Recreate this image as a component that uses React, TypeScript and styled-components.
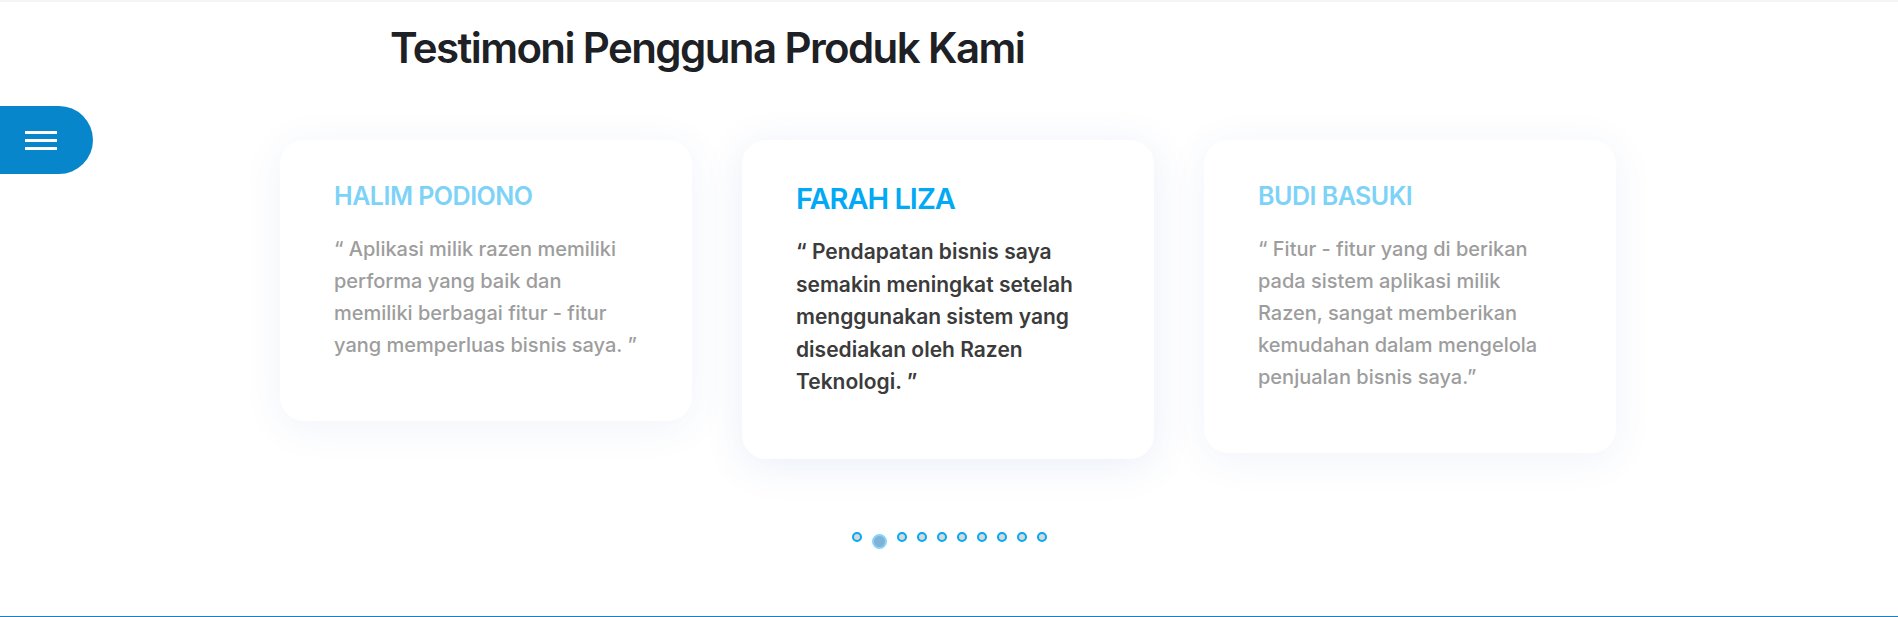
import React from "react";
import styled, { createGlobalStyle } from "styled-components";

const GlobalStyle = createGlobalStyle`
  body {
    margin: 0;
    background: #ffffff;
    font-family: Inter, "Noto Sans", sans-serif;
  }
`;

const Page = styled.div`
  height: 617px;
  box-sizing: border-box;
  border-top: 2px solid #f4f4f4;
  border-bottom: 1px solid #1b80c2;
  display: flex;
  flex-direction: column;
  align-items: center;
`;

const Section = styled.section`
  width: 1338px;
  display: flex;
  flex-direction: column;
`;

const Title = styled.h2`
  margin: 21px 0 0 110px;
  font-size: 42px;
  line-height: 50px;
  font-weight: 600;
  letter-spacing: -1.6px;
  color: #1d2024;
`;

const CardRow = styled.div`
  margin-top: 67px;
  display: flex;
  align-items: flex-start;
  gap: 50px;
`;

const Card = styled.div<{ $active?: boolean }>`
  width: 412px;
  box-sizing: border-box;
  padding: 41px 54px 60px;
  background: #ffffff;
  border-radius: 24px;
  box-shadow: 0 6px 40px rgba(25, 90, 190, ${(p) => (p.$active ? 0.1 : 0.07)});

  h3 {
    margin: 0;
    font-size: ${(p) => (p.$active ? "29px" : "25px")};
    line-height: ${(p) => (p.$active ? "35px" : "30px")};
    font-weight: 600;
    letter-spacing: ${(p) => (p.$active ? "-1px" : "-0.5px")};
    color: ${(p) => (p.$active ? "#03a9f4" : "#7dd2f8")};
  }

  p {
    margin: ${(p) => (p.$active ? "20px" : "22px")} 0 0;
    font-size: ${(p) => (p.$active ? "21px" : "20px")};
    line-height: ${(p) => (p.$active ? "32.5px" : "32px")};
    font-weight: ${(p) => (p.$active ? 600 : 500)};
    letter-spacing: 0;
    color: ${(p) => (p.$active ? "#3b3b3b" : "#9d9d9d")};
  }
`;

const Dots = styled.div`
  margin-top: 73px;
  display: flex;
  align-items: flex-start;
  justify-content: center;
  gap: 10px;
`;

const Dot = styled.span<{ $active?: boolean }>`
  box-sizing: border-box;
  width: ${(p) => (p.$active ? "15px" : "10px")};
  height: ${(p) => (p.$active ? "15px" : "10px")};
  margin-top: ${(p) => (p.$active ? "2px" : "0")};
  border-radius: 50%;
  border: 2px solid ${(p) => (p.$active ? "#86d4f7" : "#03a9f4")};
  background: ${(p) => (p.$active ? "#80b1d6" : "#d8d8d8")};
`;

const MenuButton = styled.button`
  position: fixed;
  left: 0;
  top: 106px;
  width: 93px;
  height: 68px;
  border: none;
  padding: 0 0 0 25px;
  border-radius: 0 34px 34px 0;
  background: #0886cc;
  display: flex;
  flex-direction: column;
  justify-content: center;
  gap: 5px;
  cursor: pointer;

  span {
    display: block;
    width: 32px;
    height: 3px;
    background: #ffffff;
  }
`;

const testimonials = [
  {
    name: "HALIM PODIONO",
    text: "“ Aplikasi milik razen memiliki performa yang baik dan memiliki berbagai fitur - fitur yang memperluas bisnis saya. ”",
  },
  {
    name: "FARAH LIZA",
    text: "“ Pendapatan bisnis saya semakin meningkat setelah menggunakan sistem yang disediakan oleh Razen Teknologi. ”",
    active: true,
  },
  {
    name: "BUDI BASUKI",
    text: "“ Fitur - fitur yang di berikan pada sistem aplikasi milik Razen, sangat memberikan kemudahan dalam mengelola penjualan bisnis saya.”",
  },
];

export default function App() {
  return (
    <Page>
      <GlobalStyle />
      <MenuButton aria-label="menu">
        <span />
        <span />
        <span />
      </MenuButton>
      <Section>
        <Title>Testimoni Pengguna Produk Kami</Title>
        <CardRow>
          {testimonials.map((t) => (
            <Card key={t.name} $active={t.active}>
              <h3>{t.name}</h3>
              <p>{t.text}</p>
            </Card>
          ))}
        </CardRow>
        <Dots>
          {Array.from({ length: 10 }).map((_, i) => (
            <Dot key={i} $active={i === 1} />
          ))}
        </Dots>
      </Section>
    </Page>
  );
}
